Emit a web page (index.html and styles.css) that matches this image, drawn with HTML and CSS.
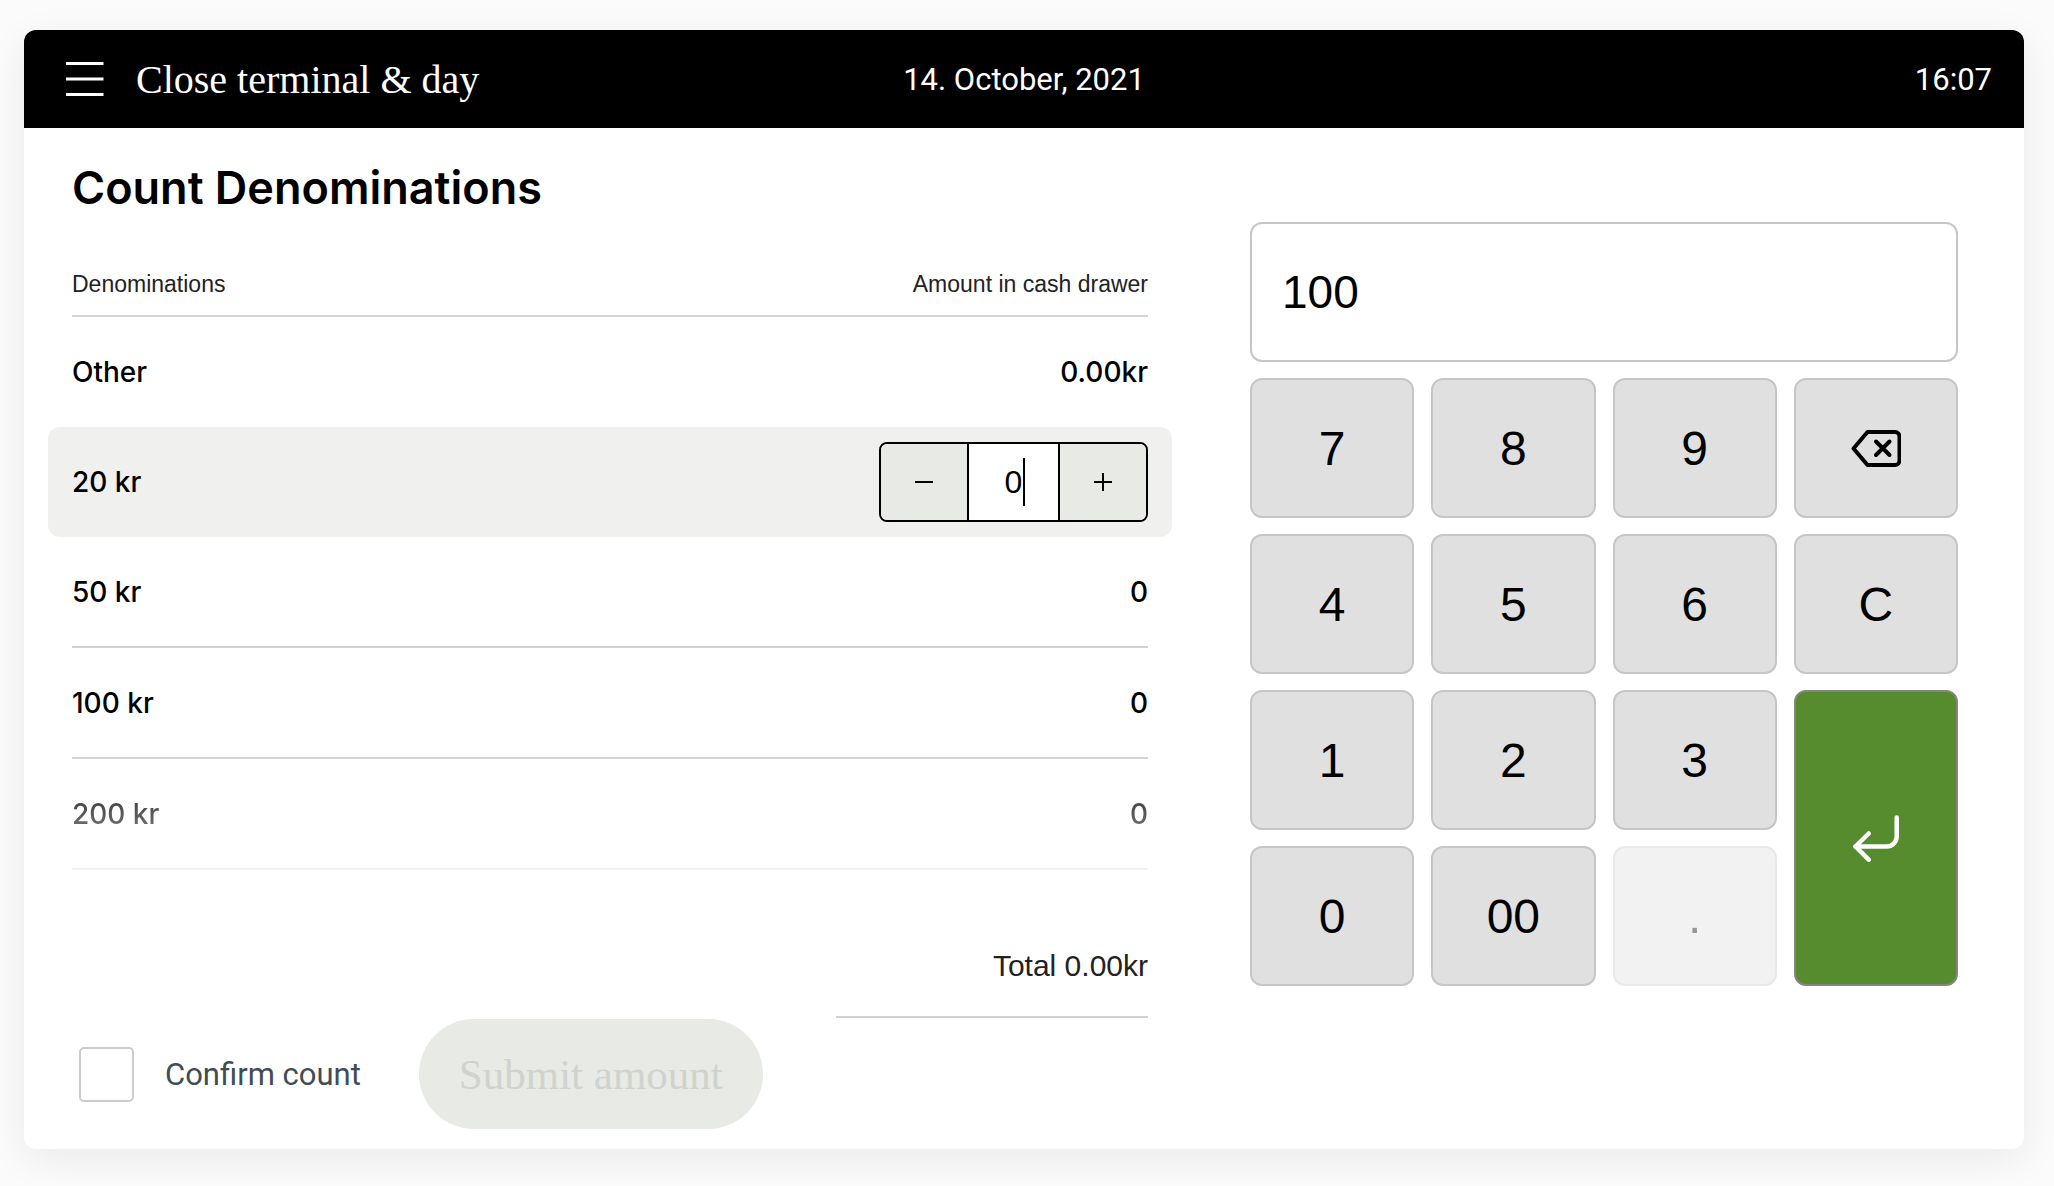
FILE: index.html
```html
<!DOCTYPE html>
<html lang="en">
<head>
    <meta charset="UTF-8">
    <title>Close terminal &amp; day</title>
    <link rel="stylesheet" href="styles.css">
</head>
<body>

<div class="terminal">
    <header class="topbar">
        <div class="topbar-left">
            <button class="menu-btn" type="button" aria-label="Menu">
                <svg width="38" height="36" viewBox="0 0 38 36" stroke="#fff" stroke-width="3">
                    <path d="M0 2.5h37.5M0 18h37.5M0 33.500h37.500"/>
                </svg>
            </button>
            <span class="topbar-title">Close terminal &amp; day</span>
        </div>
        <span class="topbar-date">14. October, 2021</span>
        <span class="topbar-time">16:07</span>
    </header>

    <main class="content">
        <section class="count">
            <h1>Count Denominations</h1>

            <table class="denominations">
                <thead>
                    <tr>
                        <th><div class="cell">Denominations</div></th>
                        <th><div class="cell">Amount in cash drawer</div></th>
                    </tr>
                </thead>
                <tbody>
                    <tr class="no-line">
                        <td><div class="cell">Other</div></td>
                        <td><div class="cell">0.00kr</div></td>
                    </tr>
                    <tr class="active no-line">
                        <td><div class="cell"><label for="amount-20">20 kr</label></div></td>
                        <td>
                            <div class="cell">
                                <div class="stepper">
                                    <button type="button" aria-label="Decrease">
                                        <svg width="20" height="20" viewBox="0 0 20 20"><path d="M1 10h18"/></svg>
                                    </button>
                                    <div class="stepper-value">
                                        <input type="text" id="amount-20" value="0">
                                        <span class="caret"></span>
                                    </div>
                                    <button type="button" aria-label="Increase">
                                        <svg width="20" height="20" viewBox="0 0 20 20"><path d="M1 10h18M10 1v18"/></svg>
                                    </button>
                                </div>
                            </div>
                        </td>
                    </tr>
                    <tr>
                        <td><div class="cell">50 kr</div></td>
                        <td><div class="cell">0</div></td>
                    </tr>
                    <tr>
                        <td><div class="cell">100 kr</div></td>
                        <td><div class="cell">0</div></td>
                    </tr>
                    <tr class="fade">
                        <td><div class="cell">200 kr</div></td>
                        <td><div class="cell">0</div></td>
                    </tr>
                </tbody>
            </table>

            <div class="total">Total 0.00kr</div>

            <div class="actions">
                <input type="checkbox" id="confirm">
                <label for="confirm">Confirm count</label>
                <button class="submit-btn" type="button" disabled>Submit amount</button>
            </div>
        </section>

        <section class="keypad">
            <input class="display" type="text" value="100" aria-label="Amount">
            <button class="key" type="button">7</button>
            <button class="key" type="button">8</button>
            <button class="key" type="button">9</button>
            <button class="key" type="button" aria-label="Backspace">
                <svg width="50" height="38" viewBox="0 0 50 38" fill="none" stroke="#000" stroke-width="4" stroke-linecap="round" stroke-linejoin="round">
                    <path d="M2.5 19.5L16.5 3H44a4.5 4.5 0 0 1 4.5 4.5v24A4.500 4.500 0 0 1 44 36H16.5z"/>
                    <path d="M25 12.5L38.500 26M38.5 12.5L25 26"/>
                </svg>
            </button>
            <button class="key" type="button">4</button>
            <button class="key" type="button">5</button>
            <button class="key" type="button">6</button>
            <button class="key" type="button">C</button>
            <button class="key" type="button">1</button>
            <button class="key" type="button">2</button>
            <button class="key" type="button">3</button>
            <button class="key enter" type="button" aria-label="Enter">
                <svg width="48" height="48" viewBox="0 0 48 48" fill="none" stroke="#fff" stroke-width="4.5" stroke-linecap="round" stroke-linejoin="round">
                    <path d="M44.7 3.5v19a10 10 0 0 1-10 10H3.5"/>
                    <path d="M16.7 19.5L3.5 32.5l13.200 13.200"/>
                </svg>
            </button>
            <button class="key" type="button">0</button>
            <button class="key" type="button">00</button>
            <button class="key" type="button" disabled>.</button>
        </section>
    </main>
</div>

</body>
</html>
```
FILE: styles.css
```css
* {
    box-sizing: border-box;
}

body {
    font-family: Inter, "Liberation Sans", sans-serif;
    background-color: #fbfbfb;
    color: #000;
    margin: 0;
    padding: 30px 30px 36px 24px;
}

button,
input {
    font-family: inherit;
    color: inherit;
    margin: 0;
    padding: 0;
}

svg {
    display: block;
}

.terminal {
    background-color: #fff;
    border-radius: 12px;
    box-shadow: 0 10px 40px rgba(0, 0, 0, 0.07);
    overflow: hidden;
}

/* Top bar */
.topbar {
    display: grid;
    grid-template-columns: 1fr auto 1fr;
    align-items: center;
    height: 98px;
    padding: 0 32px;
    background-color: #000;
    color: #fff;
    font-family: Roboto, sans-serif;
    font-size: 31px;
}

.topbar-left {
    display: flex;
    align-items: center;
    gap: 32px;
    padding-left: 10px;
}

.menu-btn {
    background: none;
    border: none;
    cursor: pointer;
}

.topbar-title {
    font-family: "Liberation Serif", serif;
    font-size: 40px;
}

.topbar-time {
    text-align: right;
}

.content {
    display: grid;
    grid-template-columns: 1124fr 708fr;
    gap: 78px;
    align-items: start;
    padding: 30px 66px 20px 24px;
}

/* Denominations */
h1 {
    margin: 0 24px 36px;
    font-size: 45px;
    font-weight: 600;
    line-height: 60px;
}

.denominations {
    width: 100%;
    border-collapse: separate;
    border-spacing: 0;
}

.denominations th,
.denominations td {
    padding: 0;
    text-align: left;
}

.denominations th:first-child,
.denominations td:first-child {
    padding-left: 24px;
}

.denominations th:last-child,
.denominations td:last-child {
    padding-right: 24px;
}

.cell {
    display: flex;
    align-items: center;
    height: 111px;
    border-bottom: 2px solid #d3d3d0;
    font-size: 28px;
    font-weight: 500;
}

.denominations th:last-child .cell,
.denominations td:last-child .cell {
    justify-content: flex-end;
}

.denominations th .cell {
    height: 63px;
    color: #222;
    font-family: "Liberation Sans", sans-serif;
    font-size: 23px;
    font-weight: 400;
}

.no-line .cell {
    height: 110px;
    border-bottom: none;
}

.active td {
    background-color: #f0f0ee;
}

.active td:first-child {
    border-radius: 12px 0 0 12px;
}

.active td:last-child {
    border-radius: 0 12px 12px 0;
}

.fade .cell {
    -webkit-mask-image: linear-gradient(to bottom, #000, rgba(0, 0, 0, 0.3));
    mask-image: linear-gradient(to bottom, #000, rgba(0, 0, 0, 0.3));
}

.stepper {
    display: grid;
    grid-template-columns: 1fr 93px 1fr;
    width: 269px;
    height: 80px;
    border: 2px solid #000;
    border-radius: 8px;
    overflow: hidden;
}

.stepper button {
    display: flex;
    align-items: center;
    justify-content: center;
    background-color: #e8eae5;
    border: none;
    cursor: pointer;
}

.stepper svg {
    stroke: #000;
    stroke-width: 2;
}

.stepper-value {
    position: relative;
    border: solid #000;
    border-width: 0 2px;
}

.stepper input {
    display: block;
    width: 100%;
    height: 100%;
    border: none;
    outline: none;
    background-color: #fff;
    font-family: "Liberation Sans", sans-serif;
    font-size: 32px;
    text-align: center;
}

.caret {
    position: absolute;
    top: 14px;
    left: calc(50% + 9px);
    width: 2px;
    height: 48px;
    background-color: #000;
}

.total {
    width: 312px;
    margin: 76px 24px 0 auto;
    padding-bottom: 30px;
    border-bottom: 2px solid #d3d3d0;
    color: #222;
    font-family: "Liberation Sans", sans-serif;
    font-size: 30px;
    line-height: 40px;
    text-align: right;
}

.actions {
    display: flex;
    align-items: center;
    padding-left: 31px;
    margin-top: 1px;
}

.actions input {
    appearance: none;
    width: 55px;
    height: 55px;
    border: 2px solid #ccccc8;
    border-radius: 5px;
    background-color: #fff;
}

.actions label {
    margin: 0 58px 0 31px;
    color: #3f4d55;
    font-family: Roboto, sans-serif;
    font-size: 31px;
}

.submit-btn {
    height: 110px;
    padding: 0 40px;
    border: none;
    border-radius: 55px;
    background-color: #e8eae5;
    color: #d0d2cd;
    font-family: "Liberation Serif", serif;
    font-size: 43px;
}

/* Keypad */
.keypad {
    display: grid;
    grid-template-columns: repeat(4, 1fr);
    grid-auto-rows: 140px;
    gap: 16px 17px;
    margin-top: 64px;
    font-family: "Liberation Sans", sans-serif;
}

.display {
    grid-column: 1 / -1;
    width: 100%;
    padding: 0 30px;
    border: 2px solid #c6c7c2;
    border-radius: 12px;
    background-color: #fff;
    font-size: 46px;
}

.key {
    display: flex;
    align-items: center;
    justify-content: center;
    border: 2px solid #c6c7c2;
    border-radius: 12px;
    background-color: #e0e0e0;
    font-size: 48px;
    cursor: pointer;
}

.key:disabled {
    opacity: 0.4;
    cursor: default;
}

.enter {
    grid-row: span 2;
    border-color: #85857d;
    background-color: #568b2e;
}
```
